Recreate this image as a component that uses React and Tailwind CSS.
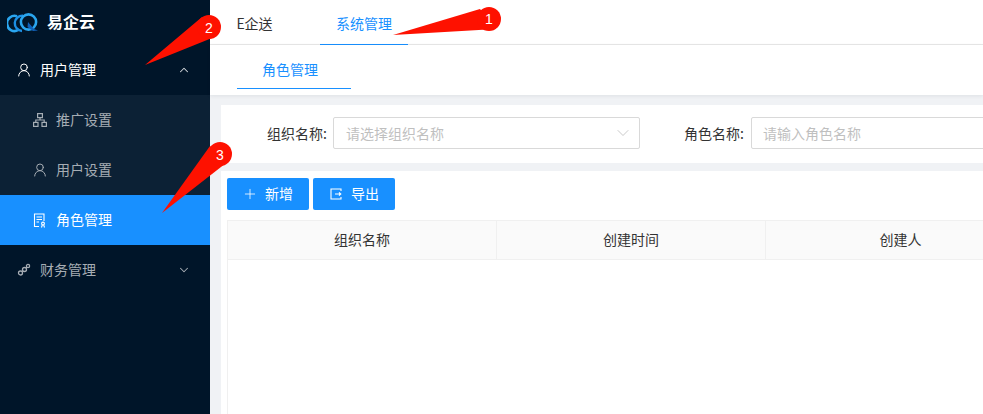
import { ChevronDown, ChevronUp, Plus, UserRound } from "lucide-react"

const font = "font-['Noto_Sans_CJK_SC','Noto_Sans',sans-serif]"

const Logo = () => (
  <svg width="32" height="22" viewBox="0 0 32 22" fill="none" className="ml-[7px]">
    <path d="M10 4.2a7.6 7.6 0 1 0 1 14" stroke="#2aa6ef" strokeWidth="2.6" />
    <path d="M16 3.6a7.4 7.4 0 0 0-1 15.4" stroke="#1c8fe4" strokeWidth="2.4" />
    <circle cx="21.5" cy="10" r="7.6" stroke="#2aa6ef" strokeWidth="2.6" />
    <path d="M21 10l6 7 4 1.5-5 .5-5.5-4Z" fill="#1060b8" />
  </svg>
)

const TreeIcon = () => (
  <svg width="14" height="14" viewBox="0 0 14 14" fill="none" stroke="currentColor" strokeWidth="1.2">
    <rect x="4.6" y="0.6" width="4.8" height="4" />
    <rect x="0.6" y="9.4" width="4.4" height="4" />
    <rect x="9" y="9.4" width="4.4" height="4" />
    <path d="M7 4.6v2.4M2.8 9.4V7h8.4v2.4" />
  </svg>
)

const RoleIcon = () => (
  <svg width="14" height="15" viewBox="0 0 14 15" fill="none" stroke="currentColor" strokeWidth="1.1">
    <path d="M6 13.5H1.5V1h9.5v7" />
    <path d="M3.5 4h5.5M3.5 6.5h5.5M3.5 9h2.5" />
    <circle cx="10" cy="10.5" r="1.4" />
    <path d="M8.5 14.5l.8-2.6M11.5 14.5l-.8-2.6" />
  </svg>
)

const LinkIcon = () => (
  <svg width="14" height="14" viewBox="0 0 14 14" fill="none" stroke="currentColor" strokeWidth="1.3">
    <circle cx="3.5" cy="10" r="2" />
    <circle cx="7.5" cy="6.5" r="2" />
    <circle cx="11" cy="3" r="1.6" />
    <path d="M5 8.6l1-.8M9 5l.8-.8" />
  </svg>
)

const ExportIcon = () => (
  <svg width="12" height="12" viewBox="0 0 12 12" fill="none" stroke="currentColor" strokeWidth="1.1">
    <path d="M11 3V1H1v10h10V9" />
    <path d="M5 6h6M9 4.4L10.8 6 9 7.6" />
  </svg>
)

const Sidebar = () => (
  <aside className="w-[210px] shrink-0 bg-[#001529] flex flex-col text-sm">
    <div className="h-[45px] flex items-center">
      <Logo />
      <span className="ml-[8px] text-base font-bold text-white pb-[3px]">易企云</span>
    </div>
    <div className="h-[50px] flex items-center pl-[16px] pr-[19px] text-white">
      <UserRound size={16} strokeWidth={1.5} />
      <span className="ml-[8px] flex-1 pb-[2px]">用户管理</span>
      <ChevronUp size={14} strokeWidth={1.8} className="text-[#d5dade]" />
    </div>
    <div className="bg-[#0c2135] text-[#a6adb4]">
      <div className="h-[50px] flex items-center pl-[33px]">
        <TreeIcon />
        <span className="ml-[9px] pb-[2px]">推广设置</span>
      </div>
      <div className="h-[50px] flex items-center pl-[32px]">
        <UserRound size={16} strokeWidth={1.5} />
        <span className="ml-[8px] pb-[2px]">用户设置</span>
      </div>
      <div className="h-[50px] flex items-center pl-[33px] bg-[#1890ff] text-white">
        <RoleIcon />
        <span className="ml-[9px] pb-[2px]">角色管理</span>
      </div>
    </div>
    <div className="h-[50px] flex items-center pl-[17px] pr-[19px] text-[#a6adb4]">
      <LinkIcon />
      <span className="ml-[9px] flex-1 pb-[2px]">财务管理</span>
      <ChevronDown size={14} strokeWidth={1.8} />
    </div>
  </aside>
)

const TopBar = () => (
  <div className="h-[45px] shrink-0 bg-white border-b border-[#e8e8e8] flex text-sm">
    <div className="w-[110px] flex items-center justify-center text-[#333] pr-[21px] pt-[1px]">E企送</div>
    <div className="w-[88px] flex items-center justify-center text-[#1890ff] border-b-2 border-[#1890ff] h-[46px] pt-[1px]">系统管理</div>
  </div>
)

const SubTabs = () => (
  <div className="h-[50px] shrink-0 bg-white shadow-[0_1px_4px_rgba(0,21,41,0.08)] pl-[27px] text-sm">
    <div className="w-[114px] h-[44px] flex items-center justify-center text-[#1890ff] border-b border-[#1890ff] pt-[4px] pr-[8px]">角色管理</div>
  </div>
)

const Filters = () => (
  <div className="h-[58px] shrink-0 bg-white flex items-center pb-[2px] text-sm">
    <span className="w-[112px] shrink-0 whitespace-nowrap text-right pr-[6px] text-[#333]">组织名称:</span>
    <div className="w-[307px] h-[32px] shrink-0 border border-[#d9d9d9] rounded-[2px] flex items-center justify-between pl-[12px] pr-[6px] text-[#bfbfbf]">
      <span className="pb-[1px]">请选择组织名称</span>
      <ChevronDown size={20} strokeWidth={1} />
    </div>
    <span className="w-[111px] shrink-0 whitespace-nowrap text-right pr-[7px] text-[#333]">角色名称:</span>
    <div className="w-[300px] h-[32px] shrink-0 border border-[#d9d9d9] rounded-[2px] flex items-center px-[11px] text-[#bfbfbf]">
      <span className="pb-[1px]">请输入角色名称</span>
    </div>
  </div>
)

const Toolbar = () => (
  <div className="flex gap-[4px] text-sm text-white">
    <div className="w-[82px] h-[32px] bg-[#1890ff] rounded-[2px] flex items-center pl-[15px]">
      <Plus size={16} strokeWidth={1.2} />
      <span className="ml-[7px] pb-[2px]">新增</span>
    </div>
    <div className="w-[82px] h-[32px] bg-[#1890ff] rounded-[2px] flex items-center pl-[17px]">
      <ExportIcon />
      <span className="ml-[9px] pb-[2px]">导出</span>
    </div>
  </div>
)

const DataTable = () => (
  <div className="mt-[10px] w-[900px] flex-1 border-l border-t border-[#f0f0f0] text-sm text-[#333]">
    <div className="flex h-[39px] bg-[#fafafa] border-b border-[#f0f0f0]">
      <div className="w-[269px] flex items-center justify-center pb-[2px] border-r border-[#f0f0f0]">组织名称</div>
      <div className="w-[269px] flex items-center justify-center pb-[2px] border-r border-[#f0f0f0]">创建时间</div>
      <div className="w-[269px] flex items-center justify-center pb-[2px]">创建人</div>
    </div>
  </div>
)

// the red numbered arrows pasted over the screenshot
const Annotations = () => (
  <svg width="983" height="414" className="absolute inset-0 pointer-events-none">
    <g fill="#fe1100">
      <path d="M393 35L480 9 496 29Z" />
      <circle cx="489" cy="19" r="12" />
      <path d="M145 65L202 17 217 36Z" />
      <circle cx="209" cy="27" r="12" />
      <path d="M162 213L210 146 230 160Z" />
      <circle cx="220" cy="154" r="12" />
    </g>
    <g fill="#fff" fontSize="14" textAnchor="middle" fontFamily="'Liberation Sans', sans-serif">
      <text x="489" y="24">1</text>
      <text x="209" y="33">2</text>
      <text x="220" y="160">3</text>
    </g>
  </svg>
)

export default function App() {
  return (
    <div className={`${font} relative flex w-[983px] h-[414px] overflow-hidden bg-[#f0f2f5]`}>
      <Sidebar />
      <main className="flex-1 min-w-0 flex flex-col">
        <TopBar />
        <SubTabs />
        <div className="flex-1 min-h-0 flex flex-col pt-[10px] pl-[11px] gap-[8px] overflow-hidden">
          <Filters />
          <div className="flex-1 flex flex-col bg-white pt-[7px] pl-[6px]">
            <Toolbar />
            <DataTable />
          </div>
        </div>
      </main>
      <Annotations />
    </div>
  )
}
